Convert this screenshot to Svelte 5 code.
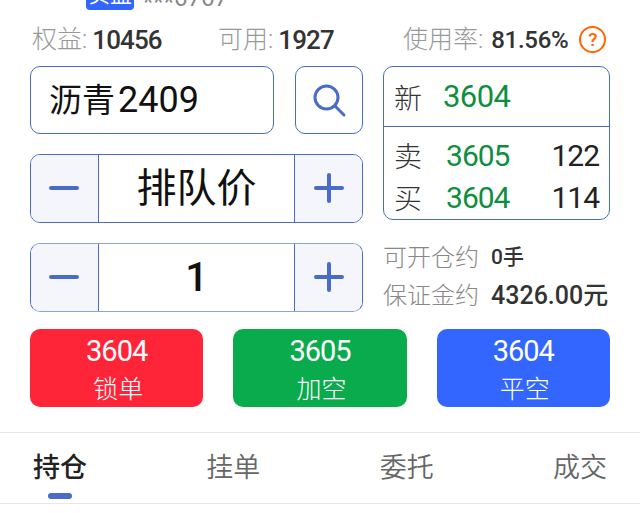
<script>
  const buttons = [
    { price: 3604, label: "锁单", color: "red" },
    { price: 3605, label: "加空", color: "green" },
    { price: 3604, label: "平空", color: "blue" },
  ];
  const tabs = ["持仓", "挂单", "委托", "成交"];
</script>

<div class="page">
  <div class="account">
    <span class="badge">实盘</span>
    <span class="account-no"><span class="stars">***</span>6767</span>
  </div>

  <div class="stats">
    <div class="stat"><span class="key">权益:</span><b>10456</b></div>
    <div class="stat"><span class="key">可用:</span><b>1927</b></div>
    <div class="stat">
      <span class="key">使用率:</span><b class="rate">81.56%</b>
      <span class="help">?</span>
    </div>
  </div>

  <div class="trade">
    <div class="left">
      <div class="search-row">
        <div class="symbol">沥青<span class="digits">2409</span></div>
        <button class="search" aria-label="搜索">
          <svg width="36" height="36" viewBox="0 0 36 36" fill="none" stroke="#4a6cc9" stroke-width="3" stroke-linecap="round">
            <circle cx="15.5" cy="15.5" r="11.5" />
            <path d="M24 24 L33 33" />
          </svg>
        </button>
      </div>

      <div class="stepper">
        <button class="step" aria-label="减"><span class="minus"></span></button>
        <div class="value cn">排队价</div>
        <button class="step" aria-label="加"><span class="minus"></span><span class="vert"></span></button>
      </div>

      <div class="stepper soft">
        <button class="step" aria-label="减"><span class="minus"></span></button>
        <div class="value num">1</div>
        <button class="step" aria-label="加"><span class="minus"></span><span class="vert"></span></button>
      </div>
    </div>

    <div class="right">
      <div class="quote">
        <div class="latest">
          <span class="q-key">新</span>
          <span class="q-price">3604</span>
        </div>
        <div class="book">
          <div class="book-row">
            <span class="q-key">卖</span>
            <span class="q-price">3605</span>
            <span class="q-vol">122</span>
          </div>
          <div class="book-row">
            <span class="q-key">买</span>
            <span class="q-price">3604</span>
            <span class="q-vol">114</span>
          </div>
        </div>
      </div>

      <div class="info">
        <div class="info-row"><span class="info-key">可开仓约</span><span class="info-small">0手</span></div>
        <div class="info-row"><span class="info-key">保证金约</span><span class="info-big">4326.00元</span></div>
      </div>
    </div>
  </div>

  <div class="actions">
    {#each buttons as btn}
      <button class="action {btn.color}">
        <span class="a-price">{btn.price}</span>
        <span class="a-label">{btn.label}</span>
      </button>
    {/each}
  </div>

  <div class="tabs">
    {#each tabs as tab, i}
      <div class="tab" class:active={i === 0}>{tab}</div>
    {/each}
  </div>
</div>

<style>
  :global(body) {
    background: #fff;
  }

  .page {
    width: 640px;
    height: 513px;
    overflow: hidden;
    font-family: Roboto, "Noto Sans CJK SC", sans-serif;
  }

  button {
    font-family: inherit;
    padding: 0;
    border: none;
    cursor: pointer;
  }

  .account {
    height: 10px;
    overflow: hidden;
    display: flex;
    align-items: flex-end;
    padding-left: 86px;
    gap: 9px;
  }

  .badge {
    width: 48px;
    height: 30px;
    flex: none;
    background: #3366ff;
    border-radius: 4px;
    color: #fff;
    font-size: 22px;
    line-height: 30px;
    text-align: center;
  }

  .account-no {
    color: #888;
    font-size: 24px;
    line-height: 30px;
    margin-bottom: -3px;
  }

  .stars {
    display: inline-block;
    transform: translateY(4px);
  }

  .stats {
    box-sizing: border-box;
    height: 56px;
    margin: 0 30px;
    padding: 3px 0 0 2px;
    display: grid;
    grid-template-columns: 186px 185px auto;
    align-items: center;
  }

  .stat {
    display: flex;
    align-items: center;
    font-size: 25px;
    line-height: 30px;
  }

  .key {
    color: #999;
    font-weight: 300;
  }

  .stat b {
    color: #333;
    font-size: 26px;
    font-weight: 500;
    letter-spacing: -0.9px;
    margin-left: 5px;
  }

  .stat b.rate {
    font-size: 24px;
    letter-spacing: -0.3px;
    margin-left: 8px;
  }

  .help {
    box-sizing: border-box;
    width: 27px;
    height: 27px;
    margin-left: 11px;
    border: 2px solid #f60;
    border-radius: 50%;
    color: #f60;
    font-size: 19px;
    font-weight: 500;
    line-height: 23px;
    text-align: center;
  }

  .trade {
    margin: 0 30px;
    display: grid;
    grid-template-columns: 333px 227px;
    gap: 20px;
  }

  .left {
    display: flex;
    flex-direction: column;
    gap: 20px;
  }

  .search-row {
    display: flex;
    justify-content: space-between;
  }

  .symbol {
    box-sizing: border-box;
    width: 244px;
    height: 68px;
    padding-left: 18px;
    border: 1px solid #4a6cc9;
    border-radius: 10px;
    color: #111;
    font-size: 33px;
    line-height: 66px;
  }

  .digits {
    font-size: 36px;
    margin-left: 3px;
  }

  .search {
    box-sizing: border-box;
    width: 68px;
    height: 68px;
    border: 1px solid #4a6cc9;
    border-radius: 10px;
    background: #fff;
    display: flex;
    align-items: center;
    justify-content: center;
  }

  .stepper {
    box-sizing: border-box;
    height: 69px;
    display: grid;
    grid-template-columns: 67px 1fr 67px;
    border: 1px solid #4a6cc9;
    border-radius: 10px;
    overflow: hidden;
  }

  .stepper.soft {
    border-top-color: #8ba2e0;
    border-bottom-color: #8ba2e0;
  }

  .step {
    position: relative;
    background: #f4f6fb;
  }

  .minus {
    position: absolute;
    left: 18px;
    top: 31px;
    width: 30px;
    height: 4px;
    border-radius: 2px;
    background: #4a6cc9;
  }

  .step:last-child .minus {
    left: 19px;
  }

  .vert {
    position: absolute;
    left: 32px;
    top: 18px;
    width: 4px;
    height: 30px;
    border-radius: 2px;
    background: #4a6cc9;
  }

  .value {
    border-left: 1px solid #4a6cc9;
    border-right: 1px solid #4a6cc9;
    color: #111;
    line-height: 67px;
    text-align: center;
  }

  .value.cn {
    font-size: 40px;
  }

  .value.num {
    font-size: 40px;
    font-weight: 500;
  }

  .right {
    display: flex;
    flex-direction: column;
    gap: 20px;
  }

  .quote {
    box-sizing: border-box;
    height: 154px;
    border: 1px solid #4a6cc9;
    border-radius: 10px;
  }

  .latest {
    height: 59px;
    border-bottom: 1px solid #4a6cc9;
    padding-left: 10px;
    display: flex;
    align-items: center;
    gap: 21px;
  }

  .latest .q-price {
    font-size: 31px;
    letter-spacing: -0.6px;
  }

  .book {
    padding: 7px 10px 0;
  }

  .book-row {
    height: 42px;
    display: flex;
    align-items: center;
  }

  .q-key {
    color: #333;
    font-size: 28px;
    font-weight: 300;
  }

  .q-price {
    color: #0f8f3e;
    font-size: 30px;
    font-weight: 450;
    letter-spacing: -1px;
  }

  .book-row .q-price {
    margin-left: 24px;
  }

  .q-vol {
    margin-left: auto;
    color: #222;
    font-size: 30px;
    font-weight: 450;
    letter-spacing: -1px;
  }

  .info {
    display: flex;
    flex-direction: column;
    gap: 8px;
  }

  .info-row {
    height: 30px;
    display: flex;
    align-items: center;
    gap: 12px;
  }

  .info-key {
    color: #888;
    font-size: 24px;
    font-weight: 300;
  }

  .info-small {
    color: #333;
    font-size: 21px;
    font-weight: 500;
  }

  .info-big {
    color: #333;
    font-size: 25px;
    font-weight: 500;
  }

  .actions {
    margin: 17px 30px 0;
    display: grid;
    grid-template-columns: repeat(3, 1fr);
    gap: 30px;
  }

  .action {
    height: 78px;
    border-radius: 10px;
    color: #fff;
    display: flex;
    flex-direction: column;
    align-items: center;
  }

  .action.red {
    background: #ff2539;
  }

  .action.green {
    background: #0aab4d;
  }

  .action.blue {
    background: #3366ff;
  }

  .a-price {
    font-size: 29px;
    font-weight: 450;
    letter-spacing: -1px;
    line-height: 44px;
  }

  .a-label {
    font-size: 25px;
    line-height: 33px;
    font-weight: 300;
    padding-left: 3px;
  }

  .tabs {
    margin-top: 25px;
    height: 70px;
    padding: 0 33px;
    border-top: 1px solid #e8e8e8;
    border-bottom: 1px solid #e8e8e8;
    display: flex;
    justify-content: space-between;
  }

  .tab {
    position: relative;
    color: #666;
    font-size: 27px;
    font-weight: 350;
    line-height: 70px;
  }

  .tab.active {
    color: #222;
    font-weight: 500;
  }

  .tab.active::after {
    content: "";
    position: absolute;
    left: 15px;
    bottom: 4px;
    width: 24px;
    height: 6px;
    border-radius: 3px;
    background: #4a6cc9;
  }
</style>
